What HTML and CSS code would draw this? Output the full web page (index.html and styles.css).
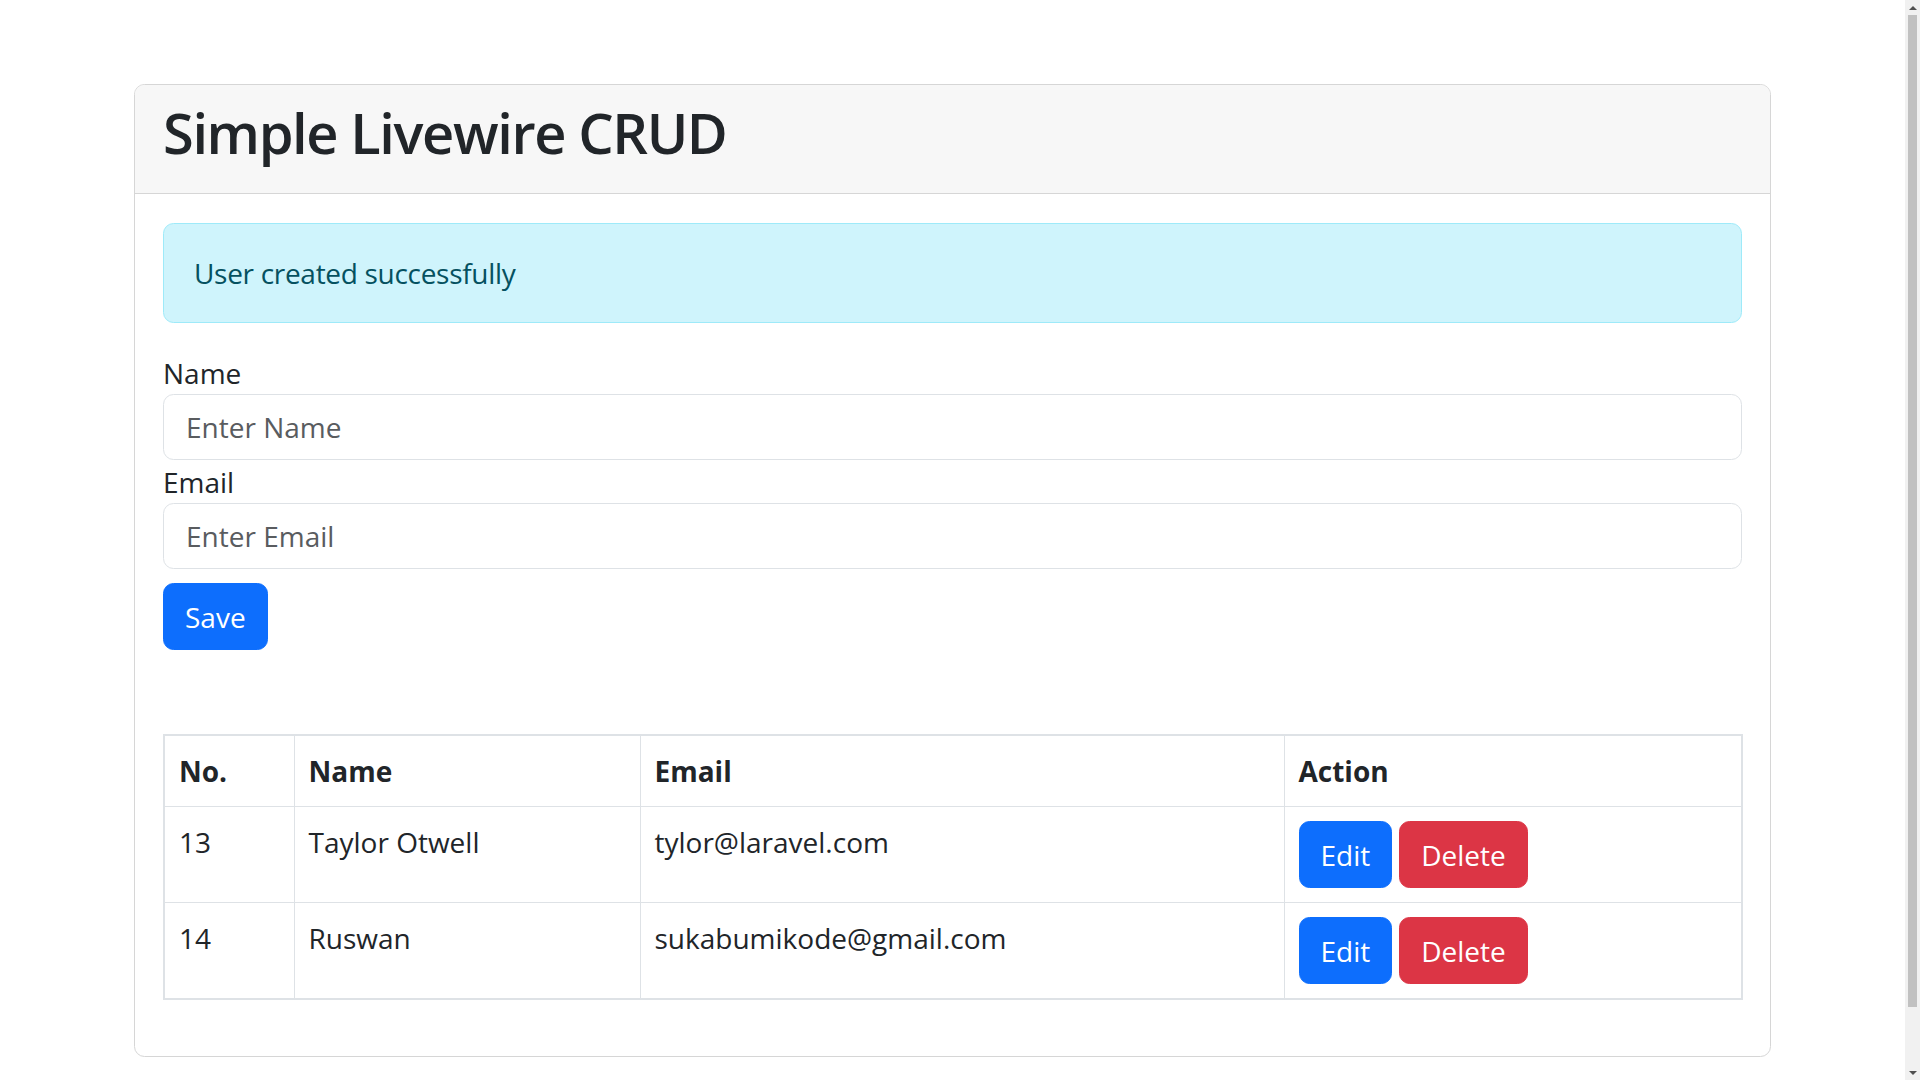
FILE: index.html
```html
<!DOCTYPE html>
<html lang="en">
<head>
<meta charset="utf-8">
<title>Simple Livewire CRUD</title>
<link rel="stylesheet" href="styles.css">
</head>
<body>
<div class="container">
  <div class="card">
    <div class="card-header">
      <h2 class="card-title">Simple Livewire CRUD</h2>
    </div>
    <div class="card-body">
      <div class="alert">User created successfully</div>
      <form class="user-form">
        <div class="field">
          <label for="name">Name</label>
          <input id="name" type="text" placeholder="Enter Name">
        </div>
        <div class="field">
          <label for="email">Email</label>
          <input id="email" type="text" placeholder="Enter Email">
        </div>
        <button type="button" class="btn btn-primary btn-save">Save</button>
      </form>
      <table class="users">
        <colgroup>
          <col class="col-no">
          <col class="col-name">
          <col class="col-email">
          <col class="col-action">
        </colgroup>
        <thead>
          <tr><th>No.</th><th>Name</th><th>Email</th><th>Action</th></tr>
        </thead>
        <tbody>
          <tr>
            <td>13</td>
            <td>Taylor Otwell</td>
            <td>tylor@laravel.com</td>
            <td><div class="actions"><button type="button" class="btn btn-primary">Edit</button><button type="button" class="btn btn-danger">Delete</button></div></td>
          </tr>
          <tr>
            <td>14</td>
            <td>Ruswan</td>
            <td>sukabumikode@gmail.com</td>
            <td><div class="actions"><button type="button" class="btn btn-primary">Edit</button><button type="button" class="btn btn-danger">Delete</button></div></td>
          </tr>
        </tbody>
      </table>
    </div>
  </div>
</div>
<div class="scrollbar" aria-hidden="true">
  <span class="arrow arrow-up"></span>
  <span class="thumb"></span>
  <span class="track-rest"></span>
  <span class="arrow arrow-down"></span>
</div>
</body>
</html>
```

FILE: styles.css
```css
html {
  overflow: hidden;
}

body {
  margin: 0;
  background: #ffffff;
  color: #212529;
  font-family: "Open Sans", "Noto Sans", sans-serif;
  font-size: 28px;
  line-height: 42px;
}

.container {
  width: 1637px;
  margin: 84px 0 84px 134px;
}

.card {
  background: #ffffff;
  border: 1px solid #d6d6d6;
  border-radius: 10.5px;
  overflow: hidden;
}

.card-header {
  background: #f7f7f7;
  border-bottom: 1px solid #d6d6d6;
  padding: 14px 28px;
}

.card-title {
  margin: 0 0 13px;
  font-size: 56px;
  line-height: 67px;
  font-weight: 600;
  letter-spacing: -1.4px;
  color: #212529;
}

.card-body {
  padding: 29px 28px 28px;
}

.alert {
  background: #cff4fc;
  border: 1px solid #9eeaf9;
  color: #055160;
  border-radius: 10.5px;
  padding: 28px 28px 28px 30px;
  margin-bottom: 29px;
  letter-spacing: -0.3px;
}

.user-form {
  margin: 0;
}

.field label {
  display: block;
}

.field + .field {
  margin-top: 1px;
}

.field input {
  display: block;
  width: 100%;
  box-sizing: border-box;
  height: 66px;
  margin: 0;
  padding: 11px 22px;
  border: 1px solid #dee2e6;
  border-radius: 10.5px;
  background: #ffffff;
  font: inherit;
  color: #212529;
}

.field input::placeholder {
  color: #595c5f;
  opacity: 1;
}

.btn {
  display: inline-block;
  height: 67px;
  margin: 0;
  padding: 0 21px;
  border: 1px solid transparent;
  border-radius: 10.5px;
  font: inherit;
  color: #ffffff;
  cursor: pointer;
}

.btn-primary {
  background: #0d6efd;
  border-color: #0d6efd;
}

.btn-danger {
  background: #dc3545;
  border-color: #dc3545;
}

.btn-save {
  margin-top: 14px;
}

.users {
  width: 100%;
  margin: 84px 0 28px;
  border-collapse: collapse;
  table-layout: fixed;
  border: 2px solid #dee2e6;
}

.col-no { width: 130px; }
.col-name { width: 346px; }
.col-email { width: 644px; }
.col-action { width: 458px; }

.users th,
.users td {
  border: 1px solid #dee2e6;
  padding: 14px 14px;
  text-align: left;
  vertical-align: top;
}

.users th {
  font-weight: 700;
}

.actions {
  display: flex;
  gap: 7px;
}

.scrollbar {
  position: fixed;
  top: 0;
  right: 0;
  width: 15px;
  height: 100vh;
  background: #f1f1f1;
  display: flex;
  flex-direction: column;
  align-items: center;
}

.arrow {
  width: 15px;
  height: 15px;
  display: flex;
  align-items: center;
  justify-content: center;
  flex: none;
}

.arrow::before {
  content: "";
  width: 0;
  height: 0;
  border-left: 4px solid transparent;
  border-right: 4px solid transparent;
}

.arrow-up::before {
  border-bottom: 4px solid #505050;
}

.arrow-down::before {
  border-top: 4px solid #505050;
}

.thumb {
  width: 9px;
  height: 992px;
  background: #c1c1c1;
  flex: none;
}

.track-rest {
  flex: 1;
}
```
